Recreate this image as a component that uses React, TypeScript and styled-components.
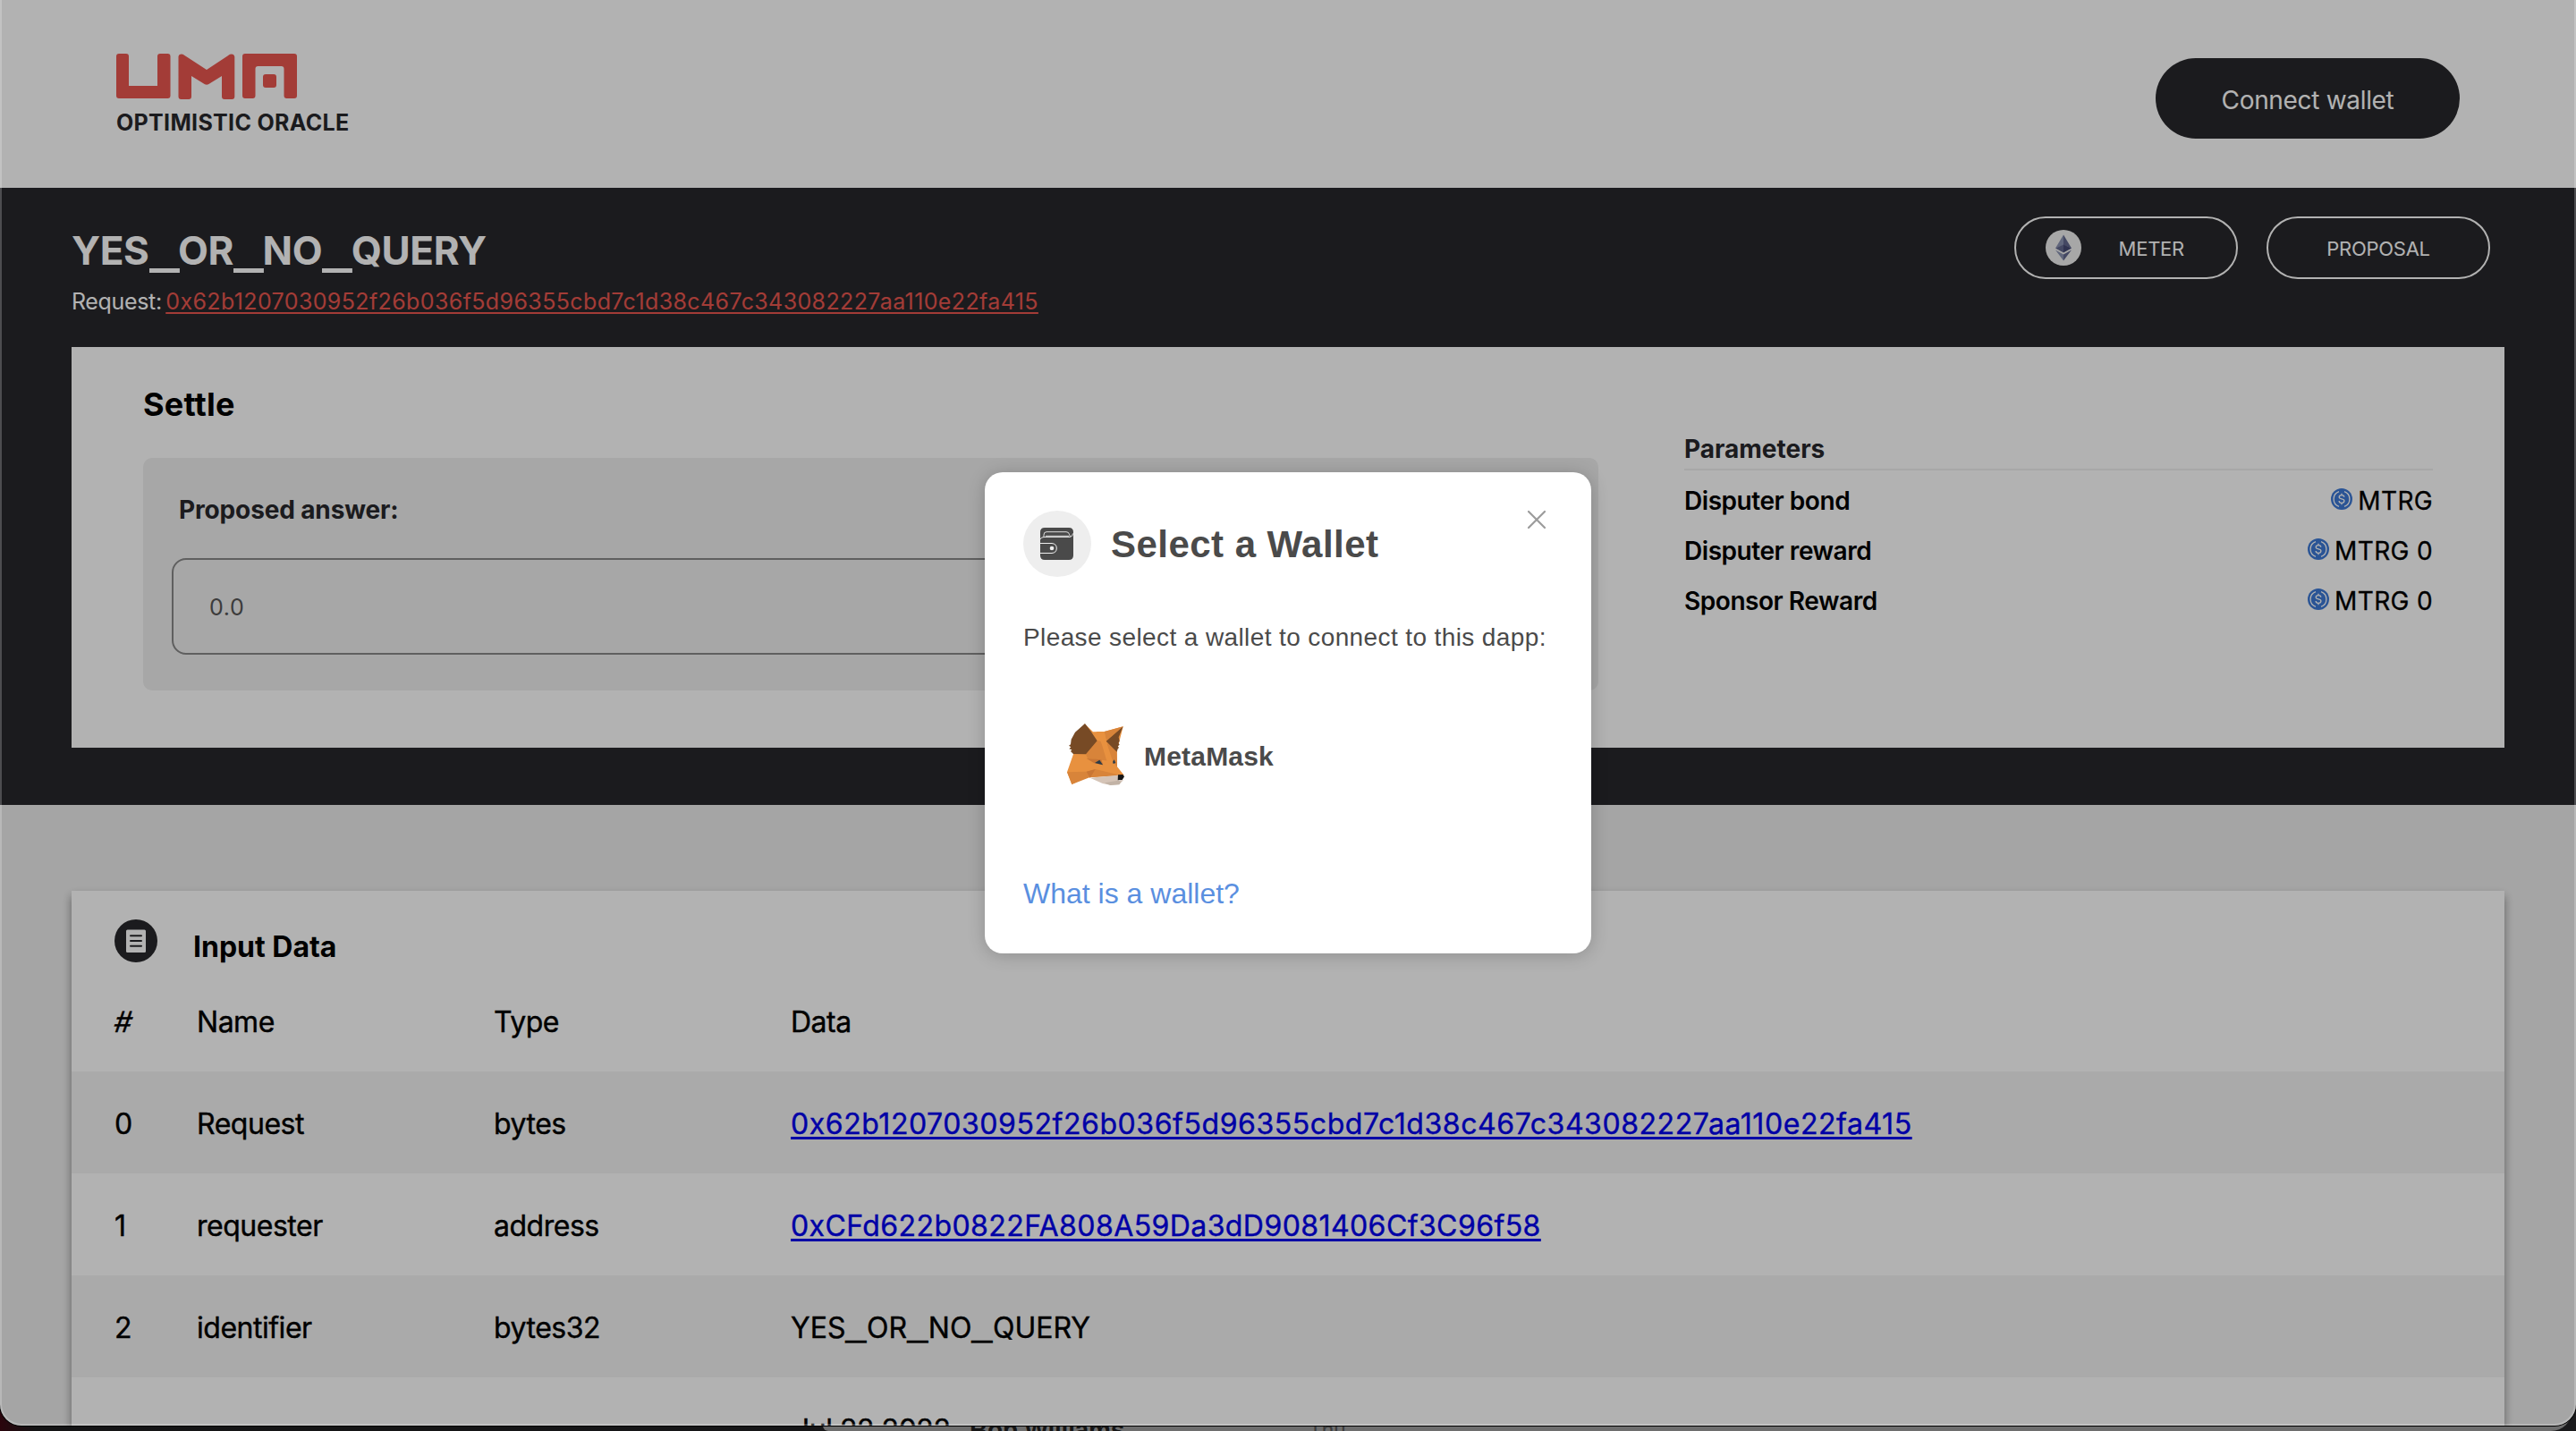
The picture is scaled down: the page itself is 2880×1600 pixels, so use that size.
import React from 'react';
import styled, { createGlobalStyle } from 'styled-components';

const GlobalStyle = createGlobalStyle`
  *, *::before, *::after { box-sizing: border-box; }
  body {
    margin: 0;
    background: #121213;
    font-family: Inter, "Liberation Sans", sans-serif;
    color: #000;
  }
  h1, h2, h3, p { margin: 0; }
`;

const Screen = styled.div`
  position: relative;
  width: 2880px;
  height: 1600px;
  overflow: hidden;
  background: linear-gradient(to right, #2a050c 0, #141415 40px, #1a1a1c 100%);
`;

const BackWindow = styled.div`
  position: absolute;
  left: 920px;
  right: 4px;
  bottom: 0;
  height: 40px;
  padding: 19px 0 0 164px;
  border-radius: 0 0 24px 6px;
  overflow: hidden;
  display: flex;
  gap: 206px;
  background: #6e6e6e;
  white-space: nowrap;
  line-height: 40px;
`;

const Sender = styled.span`
  font: bold 28px/40px "Liberation Sans", sans-serif;
  letter-spacing: -0.2px;
  color: #161616;
`;

const Day = styled.span`
  font: 24px/40px "Liberation Sans", sans-serif;
  color: #3c3c3c;
`;

const Window = styled.div`
  position: relative;
  width: 2880px;
  height: 1594px;
  overflow: hidden;
  border-radius: 0 0 24px 24px;
  box-shadow: 0 0 0 1px #000;
  background: #ededed;

  &::after {
    content: '';
    position: absolute;
    inset: 0;
    border: 2px solid rgba(255, 255, 255, 0.22);
    border-top: 0;
    border-radius: 0 0 24px 24px;
  }
`;

const Header = styled.header`
  height: 210px;
  padding: 60px 130px 0;
  display: flex;
  justify-content: space-between;
  background: #fff;
`;

const Brand = styled.div`
  display: flex;
  flex-direction: column;
  gap: 10px;

  svg { display: block; }
`;

const BrandName = styled.span`
  font-size: 25px;
  font-weight: 700;
  line-height: 30px;
  letter-spacing: 0.32px;
  color: #28282b;
`;

const ConnectButton = styled.button`
  width: 340px;
  height: 90px;
  margin-top: 5px;
  padding: 4px 0 0;
  border: 0;
  border-radius: 45px;
  background: #28282b;
  color: #fff;
  font: 28px Inter, sans-serif;
  letter-spacing: -0.32px;
`;

const Hero = styled.section`
  height: 690px;
  padding: 0 80px;
  background: #28282b;
  color: #fff;
`;

const HeroTop = styled.div`
  height: 178px;
  padding: 32px 16px 0 0;
  display: flex;
  justify-content: space-between;
  align-items: flex-start;
`;

const Title = styled.h1`
  margin-top: 10px;
  font-size: 44px;
  line-height: 56px;
  letter-spacing: -0.4px;
`;

const Underscore = styled.span`
  display: inline-block;
  width: 0.74em;
  transform: translateY(0.09em) scaleX(1.62);
  transform-origin: left center;
`;

const RequestLine = styled.p`
  margin-top: 11px;
  font-size: 25px;
  line-height: 36px;
  letter-spacing: -0.35px;
  word-spacing: -2.2px;
`;

const HashLink = styled.a`
  color: #ea5750;
  letter-spacing: 0.38px;
  text-decoration: underline 2px;
  text-underline-offset: 3px;
`;

const Pills = styled.div`
  display: flex;
  gap: 32px;
`;

const Pill = styled.div<{ $icon?: boolean }>`
  width: 250px;
  height: 70px;
  padding: ${(p) => (p.$icon ? '0 58px 0 33px' : '0')};
  display: flex;
  align-items: center;
  justify-content: ${(p) => (p.$icon ? 'space-between' : 'center')};
  border: 2px solid #fff;
  border-radius: 35px;
  font-size: 22px;
  letter-spacing: -0.25px;

  svg { margin-bottom: 1px; }
  span { margin-top: 2px; }
`;

const Panel = styled.div`
  height: 448px;
  padding: 0 80px;
  display: flex;
  gap: 96px;
  background: #fff;
`;

const Settle = styled.div`
  width: 1627px;
  padding-top: 42px;
`;

const SettleTitle = styled.h2`
  font-size: 36px;
  line-height: 44px;
  letter-spacing: 0.21px;
  color: #000;
`;

const AnswerBox = styled.div`
  height: 260px;
  margin-top: 38px;
  padding: 40px 32px 0;
  border-radius: 10px;
  background: #efefef;
`;

const AnswerLabel = styled.label`
  display: block;
  margin-left: 8px;
  font-size: 28px;
  font-weight: 700;
  line-height: 36px;
  letter-spacing: -0.14px;
  color: #28282b;
`;

const AnswerField = styled.div`
  height: 108px;
  margin-top: 36px;
  padding: 2px 40px 0;
  display: flex;
  align-items: center;
  border: 2px solid #898989;
  border-radius: 16px;
  font-size: 25px;
  letter-spacing: 0.7px;
  color: #565656;
`;

const Params = styled.div`
  flex: 1;
  padding-top: 96px;
  color: #000;
`;

const ParamsTitle = styled.h3`
  height: 42px;
  margin-bottom: 6px;
  border-bottom: 2px solid #f0f0f0;
  font-size: 28px;
  line-height: 36px;
  color: #28282b;
`;

const ParamRow = styled.div`
  height: 56px;
  display: flex;
  align-items: center;
  justify-content: space-between;
  font-size: 28px;
  letter-spacing: 0.35px;

  b {
    font-weight: 600;
    letter-spacing: -0.45px;
  }
`;

const Amount = styled.span`
  display: flex;
  align-items: center;
  gap: 6px;
  -webkit-text-stroke: 0.3px currentColor;

  svg { margin-bottom: 4px; }
`;

const Body = styled.section`
  padding: 96px 80px 0;
`;

const Card = styled.div`
  background: #fff;
  box-shadow: 0 6px 10px rgba(0, 0, 0, 0.42);
`;

const CardHead = styled.div`
  height: 88px;
  padding: 32px 48px 0;
  display: flex;
  gap: 40px;

  h2 {
    margin-top: 11px;
    font-size: 32px;
    line-height: 40px;
    letter-spacing: 0;
  }
`;

const Row = styled.div<{ $striped?: boolean }>`
  height: 114px;
  padding: 2px 48px 0;
  display: grid;
  grid-template-columns: 92px 332px 332px 1fr;
  align-items: center;
  font-size: 32px;
  letter-spacing: -0.48px;
  -webkit-text-stroke: 0.4px currentColor;
  white-space: nowrap;
  background: ${(p) => (p.$striped ? '#f4f4f4' : '#fff')};
`;

const NumberSign = styled.span`
  justify-self: start;
  transform: skewX(-10deg);
`;

const PlainValue = styled.span`
  letter-spacing: -0.02px;
`;

const DateValue = styled.span`
  padding-left: 3px;
`;

const DataLink = styled.a<{ $track: number }>`
  justify-self: start;
  color: #0000ee;
  letter-spacing: ${(p) => p.$track}px;
  text-decoration: underline 3px;
  text-underline-offset: 3px;
`;

const Overlay = styled.div`
  position: absolute;
  inset: 0;
  display: flex;
  align-items: center;
  justify-content: center;
  background: rgba(0, 0, 0, 0.3);
`;

const Modal = styled.div`
  position: relative;
  width: 678px;
  height: 538px;
  padding: 43px 43px 0;
  border-radius: 20px;
  background: #fff;
  box-shadow: 0 2px 20px rgba(0, 0, 0, 0.2);
  color: #4a4a4a;
  font-family: "Liberation Sans", Arial, sans-serif;
`;

const ModalHead = styled.div`
  display: flex;
  align-items: center;
  gap: 22px;

  h2 {
    margin-top: 1px;
    font-size: 42px;
    line-height: 50px;
    letter-spacing: 0.46px;
  }
`;

const WalletBadge = styled.span`
  width: 76px;
  height: 74px;
  padding-right: 1px;
  display: flex;
  align-items: center;
  justify-content: center;
  border-radius: 50%;
  background: #eee;
`;

const CloseButton = styled.button`
  position: absolute;
  top: 42px;
  right: 50px;
  padding: 0;
  border: 0;
  background: none;

  svg { display: block; }
`;

const Description = styled.p`
  margin-top: 52px;
  font-size: 28px;
  line-height: 32px;
  letter-spacing: 0.39px;
  white-space: nowrap;
`;

const WalletOption = styled.div`
  margin-top: 79px;
  padding-left: 48px;
  display: flex;
  align-items: center;
  gap: 21px;

  b {
    margin-top: 5px;
    font-size: 30px;
    line-height: 36px;
    letter-spacing: 0.2px;
  }
`;

const HelpLink = styled.a`
  display: block;
  margin-top: 103px;
  font-size: 32px;
  line-height: 36px;
  color: #5a8fe0;
`;

const UmaLogo = () => (
  <svg width="203" height="52" viewBox="0 0 203 52" fill="#ea5750">
    <path d="M3 0H11Q14 0 14 3V36H46V3Q46 0 49 0H57.500Q60.500 0 60.500 3V47Q60.500 50 57.500 50H3Q0 50 0 47V3Q0 0 3 0Z" />
    <path d="M69.500 3Q70 -.5 74.500 .8L101 18L127 .8Q131.500 -.5 132.300 3.500V48Q132.300 51 129.300 51H121Q118 51 118 48V25L103 34.300Q101 35.200 99 34.300L84 25V48Q84 51 81 51H72.500Q69.500 51 69.500 48Z" />
    <path d="M144 0H199Q202 0 202 3V47Q202 50 199 50H190.500Q187.500 50 187.500 47V17Q187.500 14 184.500 14H158.500Q155.500 14 155.500 17V47Q155.500 50 152.500 50H144Q141 50 141 47V3Q141 0 144 0Z" />
    <rect x="164" y="23" width="15" height="15" rx="3" />
  </svg>
);

const EthIcon = () => (
  <svg width="40" height="40" viewBox="0 0 40 40">
    <circle cx="20" cy="20" r="20" fill="#f0f0f0" />
    <path d="M20 5.500L11 20.500L20 17Z" fill="#8a92b2" />
    <path d="M20 5.500L29 20.500L20 17Z" fill="#62688f" />
    <path d="M11 20.500L20 16.500V25.500Z" fill="#62688f" />
    <path d="M29 20.500L20 16.500V25.500Z" fill="#454a75" />
    <path d="M11 22.500L20 27.500V34.500Z" fill="#8a92b2" />
    <path d="M29 22.500L20 27.500V34.500Z" fill="#62688f" />
  </svg>
);

const CoinIcon = () => (
  <svg width="24" height="24" viewBox="0 0 24 24" fill="none">
    <circle cx="12" cy="12" r="12" fill="#3d79d6" />
    <path d="M9 3.700A8.800 8.800 0 0 0 9 20.300M15 3.700A8.800 8.800 0 0 1 15 20.300" stroke="#fff" strokeWidth="1.300" />
    <path d="M14.800 9.800C14.800 8.200 13.600 7.600 12 7.600S9.200 8.300 9.200 9.800C9.200 13 14.900 10.800 14.900 14.100C14.900 15.600 13.600 16.300 12 16.300S9.100 15.600 9.100 14M12 5.800V7.600M12 16.300V18.200" stroke="#fff" strokeWidth="1.300" />
  </svg>
);

const DocumentIcon = () => (
  <svg width="48" height="48" viewBox="0 0 48 48">
    <circle cx="24" cy="24" r="24" fill="#28282b" />
    <rect x="13" y="11.500" width="22" height="25.500" rx="1.500" fill="#fff" />
    <path d="M18 18.200H30M18 24H30M18 29.800H30" stroke="#28282b" strokeWidth="2" strokeLinecap="round" />
  </svg>
);

const WalletIcon = () => (
  <svg width="37" height="36" viewBox="0 0 37 36">
    <path d="M5 0H32Q37 0 37 5V31Q37 36 32 36H5Q0 36 0 31V5Q0 0 5 0Z" fill="#4a4a4a" />
    <path d="M0 13Q1 10.500 4 10.500H33Q36.500 10 36.500 6.500M4 10.500V8Q4 4.700 7 4.700H29Q32 4.700 32.500 7.500L33.500 10M6 9.300H32" fill="none" stroke="#eee" strokeWidth="0.900" />
    <path d="M0 17.500H13Q18.300 18 18.300 23T13 28.500H0" fill="none" stroke="#eee" strokeWidth="1" />
    <circle cx="13" cy="23" r="2.300" fill="#eee" />
  </svg>
);

const CloseIcon = () => (
  <svg width="22" height="22" viewBox="0 0 22 22">
    <path d="M2 2L20 20M20 2L2 20" stroke="#9b9b9b" strokeWidth="2.200" strokeLinecap="round" />
  </svg>
);

const FoxIcon = () => (
  <svg width="66" height="70" viewBox="168 738 198 210">
    <path d="M258 769L296 768L359 751L338 833L339 886L362 914L342 916L232 922L187 945L171 904L192 844L230 742Z" fill="#e8913f" />
    <path d="M296 768L359 751L302 799Z" fill="#d8843a" />
    <path d="M272 799L234 844L240 858L310 866L288 800Z" fill="#d8843a" />
    <path d="M302 800L338 833L339 886L322 868Z" fill="#d8843a" />
    <path d="M171 904L236 902L266 894L340 912L342 916L246 922L187 945Z" fill="#d8843a" />
    <path d="M236 902L266 894L248 924Z" fill="#c97634" />
    <path d="M236 858L286 862L292 880L262 874Z" fill="#c97634" />
    <path d="M270 768L296 768L306 812L324 866L352 908L304 866L288 812Z" fill="#e8913f" />
    <path d="M231 741L252 769L272 799L234 844L192 843L183 834L187 829L178 826L184 820L177 815L183 811L185 794L198 770Z" fill="#774a25" />
    <path d="M359 751L302 800L338 836L341 826L345 822L341 817L347 812L343 806L347 800L344 787Z" fill="#774a25" />
    <path d="M264 873L280 863L291 880Z" fill="#2d3c48" />
    <path d="M324 869L329 862L334 873L326 876Z" fill="#2d3c48" />
    <path d="M248 923L342 914L344 932L360 930L346 945L316 947L290 942Z" fill="#d5c4b7" />
    <path d="M296 940L342 932L352 936L346 946L316 948Z" fill="#c2b3a6" />
    <path d="M342 913L358 912L363 919L356 930L341 931Z" fill="#161616" />
  </svg>
);

const Identifier = () => (
  <>
    YES<Underscore>_</Underscore>OR<Underscore>_</Underscore>NO<Underscore>_</Underscore>QUERY
  </>
);

const REQUEST_HASH = '0x62b1207030952f26b036f5d96355cbd7c1d38c467c343082227aa110e22fa415';
const REQUESTER = '0xCFd622b0822FA808A59Da3dD9081406Cf3C96f58';

const parameters = [
  { label: 'Disputer bond', amount: 'MTRG' },
  { label: 'Disputer reward', amount: 'MTRG 0' },
  { label: 'Sponsor Reward', amount: 'MTRG 0' },
];

const inputs: { index: string; name: string; type: string; data: React.ReactNode }[] = [
  { index: '0', name: 'Request', type: 'bytes', data: <DataLink $track={0.56}>{REQUEST_HASH}</DataLink> },
  { index: '1', name: 'requester', type: 'address', data: <DataLink $track={0.42}>{REQUESTER}</DataLink> },
  { index: '2', name: 'identifier', type: 'bytes32', data: <PlainValue><Identifier /></PlainValue> },
  { index: '', name: '', type: '', data: <DateValue>Jul 22 2022</DateValue> },
];

export default function App() {
  return (
    <Screen>
      <GlobalStyle />
      <BackWindow>
        <Sender>Bob Williams</Sender>
        <Day>Thu</Day>
      </BackWindow>
      <Window>
        <Header>
          <Brand>
            <UmaLogo />
            <BrandName>OPTIMISTIC ORACLE</BrandName>
          </Brand>
          <ConnectButton>Connect wallet</ConnectButton>
        </Header>
        <Hero>
          <HeroTop>
            <div>
              <Title><Identifier /></Title>
              <RequestLine>
                Request: <HashLink>{REQUEST_HASH}</HashLink>
              </RequestLine>
            </div>
            <Pills>
              <Pill $icon><EthIcon /><span>METER</span></Pill>
              <Pill><span>PROPOSAL</span></Pill>
            </Pills>
          </HeroTop>
          <Panel>
            <Settle>
              <SettleTitle>Settle</SettleTitle>
              <AnswerBox>
                <AnswerLabel>Proposed answer:</AnswerLabel>
                <AnswerField>0.0</AnswerField>
              </AnswerBox>
            </Settle>
            <Params>
              <ParamsTitle>Parameters</ParamsTitle>
              {parameters.map((p) => (
                <ParamRow key={p.label}>
                  <b>{p.label}</b>
                  <Amount><CoinIcon />{p.amount}</Amount>
                </ParamRow>
              ))}
            </Params>
          </Panel>
        </Hero>
        <Body>
          <Card>
            <CardHead>
              <DocumentIcon />
              <h2>Input Data</h2>
            </CardHead>
            <Row>
              <NumberSign>#</NumberSign>
              <span>Name</span>
              <span>Type</span>
              <span>Data</span>
            </Row>
            {inputs.map((r, i) => (
              <Row key={i} $striped={i % 2 === 0}>
                <span>{r.index}</span>
                <span>{r.name}</span>
                <span>{r.type}</span>
                {r.data}
              </Row>
            ))}
          </Card>
        </Body>
        <Overlay>
          <Modal>
            <ModalHead>
              <WalletBadge><WalletIcon /></WalletBadge>
              <h2>Select a Wallet</h2>
            </ModalHead>
            <CloseButton aria-label="Close"><CloseIcon /></CloseButton>
            <Description>Please select a wallet to connect to this dapp:</Description>
            <WalletOption>
              <FoxIcon />
              <b>MetaMask</b>
            </WalletOption>
            <HelpLink>What is a wallet?</HelpLink>
          </Modal>
        </Overlay>
      </Window>
    </Screen>
  );
}
